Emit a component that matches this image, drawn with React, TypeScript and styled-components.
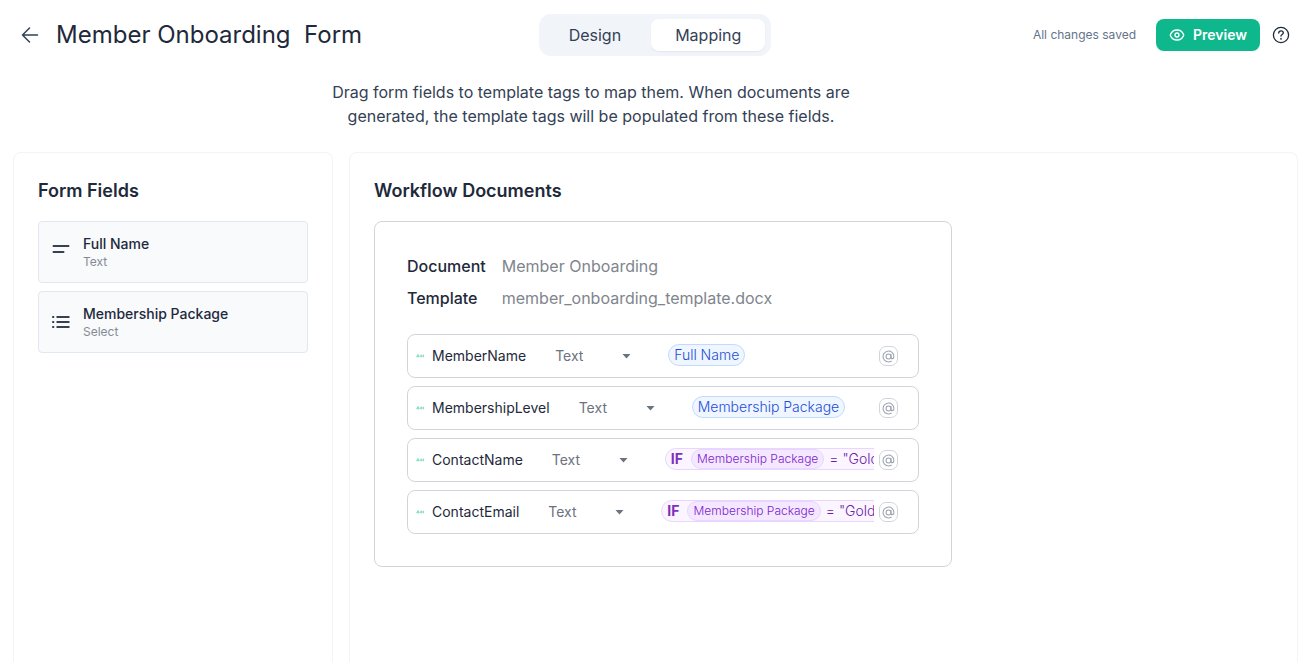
import React from "react";
import styled, { createGlobalStyle } from "styled-components";

const GlobalStyle = createGlobalStyle`
  * { box-sizing: border-box; }
  body {
    margin: 0;
    background: #fff;
    color: #1e293b;
    font-family: Inter, "Liberation Sans", sans-serif;
    font-size: 16px;
    line-height: 24px;
  }
  h1, h2, p, ul, dl, dd { margin: 0; padding: 0; }
  button, select { font: inherit; color: inherit; }
`;

const Page = styled.div`
  display: flex;
  flex-direction: column;
  height: 100vh;
  overflow: hidden;
`;

const Header = styled.header`
  display: grid;
  grid-template-columns: 1fr auto 1fr;
  align-items: center;
  flex: none;
  padding: 14px 22px 0 20px;
`;

const TitleGroup = styled.div`
  display: flex;
  align-items: center;
  gap: 16px;
`;

const IconButton = styled.button`
  display: flex;
  padding: 0;
  border: 0;
  background: none;
  cursor: pointer;
`;

const Title = styled.h1`
  font-size: 24px;
  line-height: 32px;
  font-weight: 400;
  white-space: pre;
`;

const Tabs = styled.nav`
  display: flex;
  gap: 6px;
  padding: 5px 6px;
  border-radius: 12px;
  background: #f1f5f9;
`;

const Tab = styled.button<{ $active?: boolean }>`
  height: 32px;
  padding: 0 24px;
  border: 0;
  border-radius: 8px;
  color: #334155;
  background: ${(p) => (p.$active ? "#fff" : "transparent")};
  box-shadow: ${(p) => (p.$active ? "0 1px 2px rgba(15, 23, 42, 0.06)" : "none")};
  cursor: pointer;
`;

const Actions = styled.div`
  display: flex;
  align-items: center;
  justify-content: flex-end;
`;

const SaveStatus = styled.span`
  margin-right: 20px;
  font-size: 12px;
  line-height: 20px;
  color: #64748b;
`;

const PreviewButton = styled.button`
  display: flex;
  align-items: center;
  gap: 8px;
  height: 32px;
  margin-right: 12px;
  padding: 0 13px;
  border: 0;
  border-radius: 8px;
  background: #0fb78d;
  color: #fff;
  font-size: 14px;
  font-weight: 600;
  cursor: pointer;
`;

const Intro = styled.p`
  align-self: center;
  flex: none;
  width: 560px;
  margin: 24px 130px 24px 0;
  color: #334155;
  text-align: center;
`;

const Columns = styled.main`
  display: grid;
  grid-template-columns: 320px 1fr;
  gap: 16px;
  flex: 1;
  padding: 0 14px 0 13px;
`;

const Panel = styled.section`
  padding: 24px 24px 0;
  border: 1px solid #f1f5f9;
  border-bottom: 0;
  border-radius: 8px 8px 0 0;
`;

const PanelTitle = styled.h2`
  margin-bottom: 16px;
  font-size: 18px;
  line-height: 28px;
  font-weight: 600;
`;

const FieldList = styled.ul`
  display: flex;
  flex-direction: column;
  gap: 8px;
  list-style: none;
`;

const Field = styled.li`
  display: flex;
  align-items: center;
  gap: 12px;
  height: 62px;
  padding: 0 12px;
  border: 1px solid #e2e8f0;
  border-radius: 4px;
  background: #f8fafc;
`;

const FieldName = styled.div`
  font-size: 14px;
  line-height: 20px;
  font-weight: 500;
`;

const FieldType = styled.div`
  font-size: 12px;
  line-height: 16px;
  color: #858b93;
`;

const DocumentCard = styled.article`
  max-width: 578px;
  padding: 32px;
  border: 1px solid #d1d5db;
  border-radius: 8px;
`;

const Meta = styled.dl`
  display: grid;
  grid-template-columns: max-content 1fr;
  gap: 8px 16px;
  margin-bottom: 24px;
`;

const MetaLabel = styled.dt`
  font-weight: 500;
`;

const MetaValue = styled.dd`
  color: #80858d;
`;

const MappingRow = styled.li`
  display: flex;
  align-items: center;
  height: 44px;
  padding: 0 20px 0 8px;
  border: 1px solid #d1d5db;
  border-radius: 8px;
  font-size: 14px;
`;

const TagLabel = styled.label`
  display: flex;
  align-items: center;
  gap: 8px;
  flex: none;
  margin-right: 29px;
`;

const TypePicker = styled.div`
  display: grid;
  flex: none;
  align-items: center;
  width: 76px;
  margin-right: 37px;
  color: #6b7280;

  > * { grid-area: 1 / 1; }
  > svg { justify-self: end; pointer-events: none; }
`;

const TypeSelect = styled.select`
  width: 100%;
  padding: 0;
  border: 0;
  background: none;
  appearance: none;
`;

const Slot = styled.div`
  display: flex;
  flex: 1;
  min-width: 0;
  margin-right: 5px;
  padding-bottom: 2px;
  overflow: hidden;
  font-weight: 300;
`;

const FieldPill = styled.span`
  flex: none;
  height: 22px;
  padding: 0 5px;
  border: 1px solid #bfdbfe;
  border-radius: 11px;
  background: #eff6ff;
  color: #1d4ed8;
  line-height: 20px;
`;

const RulePill = styled.span`
  display: flex;
  align-items: center;
  flex: none;
  gap: 5px;
  height: 22px;
  padding: 0 5px;
  border: 1px solid #e9d5ff;
  border-radius: 11px;
  background: #faf5ff;
  color: #6b21a8;
  line-height: 20px;
  white-space: nowrap;
`;

const Keyword = styled.strong`
  margin-right: 3px;
  color: #7e30b8;
  font-weight: 700;
`;

const Operand = styled.span`
  padding: 0 5px;
  border: 1px solid #e9d5ff;
  border-radius: 10px;
  background: #f3e8ff;
  color: #7e22ce;
  font-size: 12px;
  line-height: 18px;
`;

const MentionButton = styled.button`
  display: flex;
  align-items: center;
  justify-content: center;
  flex: none;
  width: 19px;
  height: 20px;
  padding: 0;
  border: 1px solid #d1d5db;
  border-radius: 7px;
  background: #fff;
  color: #9ca3af;
`;

const BackIcon = () => (
  <svg width="20" height="20" viewBox="0 0 20 20" fill="none" stroke="#334155" strokeWidth="1.5" strokeLinecap="round" strokeLinejoin="round">
    <path d="M17.5 10H2.5M9.500 3 2.500 10l7 7" />
  </svg>
);

const EyeIcon = () => (
  <svg width="16" height="16" viewBox="0 0 24 24" fill="none" stroke="currentColor" strokeWidth="2" strokeLinecap="round" strokeLinejoin="round">
    <path d="M2 12.3a1 1 0 0 1 0-.6C3.600 7.500 7.500 4.500 12 4.500s8.400 3 10 7.200a1 1 0 0 1 0 .6c-1.600 4.200-5.500 7.200-10 7.200s-8.400-3-10-7.200Z" />
    <circle cx="12" cy="12" r="3" />
  </svg>
);

const HelpIcon = () => (
  <svg width="18" height="18" viewBox="0 0 18 18" fill="none" stroke="#1e293b" strokeWidth="1.300" strokeLinecap="round" strokeLinejoin="round">
    <circle cx="9" cy="9" r="7.600" />
    <path d="M6.700 7c.1-1.300 1.100-2.100 2.300-2.100S11.300 5.700 11.300 6.900c0 1.500-2.300 1.700-2.300 3.200" />
    <circle cx="9" cy="12.700" r=".3" />
  </svg>
);

const TextIcon = () => (
  <svg width="20" height="20" viewBox="0 0 20 20" stroke="#374151" strokeWidth="2" strokeLinecap="round">
    <path d="M2.500 4h15M2.500 10h10" />
  </svg>
);

const ListIcon = () => (
  <svg width="20" height="20" viewBox="0 0 20 20" stroke="#374151" strokeWidth="1.800">
    <path d="M5.500 5h13M5.500 10h13M5.500 15h13M1.200 5h2M1.200 10h2M1.200 15h2" />
  </svg>
);

const TagIcon = () => (
  <svg width="8" height="8" viewBox="0 0 8 8" fill="#8fdcc6">
    <path d="M0 5.200 1.500 2.300h1L4 5.200z" />
    <path fillRule="evenodd" d="M4.300 2.800h1.700v2.400H4.300zM6.500 2.800H8v2.400H6.500z" />
  </svg>
);

const CaretIcon = () => (
  <svg width="9" height="5" viewBox="0 0 9 5" fill="#6b7280">
    <path d="M.5 0h8l-4 4.500z" />
  </svg>
);

const MentionIcon = () => (
  <svg width="13" height="13" viewBox="0 0 24 24" fill="none" stroke="currentColor" strokeWidth="2" strokeLinecap="round">
    <circle cx="12" cy="12" r="4.500" />
    <path d="M16.500 8v5c0 4 5.500 4 5.500-1a10 10 0 1 0-5 8.660" />
  </svg>
);

const fields = [
  { name: "Full Name", type: "Text", icon: <TextIcon /> },
  { name: "Membership Package", type: "Select", icon: <ListIcon /> },
];

const Rule = () => (
  <RulePill>
    <Keyword>IF</Keyword>
    <Operand>Membership Package</Operand>
    <span>= "Gold"</span>
  </RulePill>
);

const mappings = [
  { tag: "MemberName", value: <FieldPill>Full Name</FieldPill> },
  { tag: "MembershipLevel", value: <FieldPill>Membership Package</FieldPill> },
  { tag: "ContactName", value: <Rule /> },
  { tag: "ContactEmail", value: <Rule /> },
];

export default function App() {
  return (
    <>
      <GlobalStyle />
      <Page>
        <Header>
          <TitleGroup>
            <IconButton aria-label="Back"><BackIcon /></IconButton>
            <Title>Member Onboarding  Form</Title>
          </TitleGroup>
          <Tabs>
            <Tab>Design</Tab>
            <Tab $active aria-current="page">Mapping</Tab>
          </Tabs>
          <Actions>
            <SaveStatus>All changes saved</SaveStatus>
            <PreviewButton><EyeIcon />Preview</PreviewButton>
            <IconButton aria-label="Help"><HelpIcon /></IconButton>
          </Actions>
        </Header>
        <Intro>
          Drag form fields to template tags to map them. When documents are
          generated, the template tags will be populated from these fields.
        </Intro>
        <Columns>
          <Panel>
            <PanelTitle>Form Fields</PanelTitle>
            <FieldList>
              {fields.map((f) => (
                <Field key={f.name}>
                  {f.icon}
                  <div>
                    <FieldName>{f.name}</FieldName>
                    <FieldType>{f.type}</FieldType>
                  </div>
                </Field>
              ))}
            </FieldList>
          </Panel>
          <Panel>
            <PanelTitle>Workflow Documents</PanelTitle>
            <DocumentCard>
              <Meta>
                <MetaLabel>Document</MetaLabel>
                <MetaValue>Member Onboarding</MetaValue>
                <MetaLabel>Template</MetaLabel>
                <MetaValue>member_onboarding_template.docx</MetaValue>
              </Meta>
              <FieldList>
                {mappings.map((m) => (
                  <MappingRow key={m.tag}>
                    <TagLabel htmlFor={m.tag}><TagIcon />{m.tag}</TagLabel>
                    <TypePicker>
                      <TypeSelect id={m.tag} defaultValue="Text">
                        <option>Text</option>
                      </TypeSelect>
                      <CaretIcon />
                    </TypePicker>
                    <Slot>{m.value}</Slot>
                    <MentionButton aria-label={`Insert field into ${m.tag}`}><MentionIcon /></MentionButton>
                  </MappingRow>
                ))}
              </FieldList>
            </DocumentCard>
          </Panel>
        </Columns>
      </Page>
    </>
  );
}
